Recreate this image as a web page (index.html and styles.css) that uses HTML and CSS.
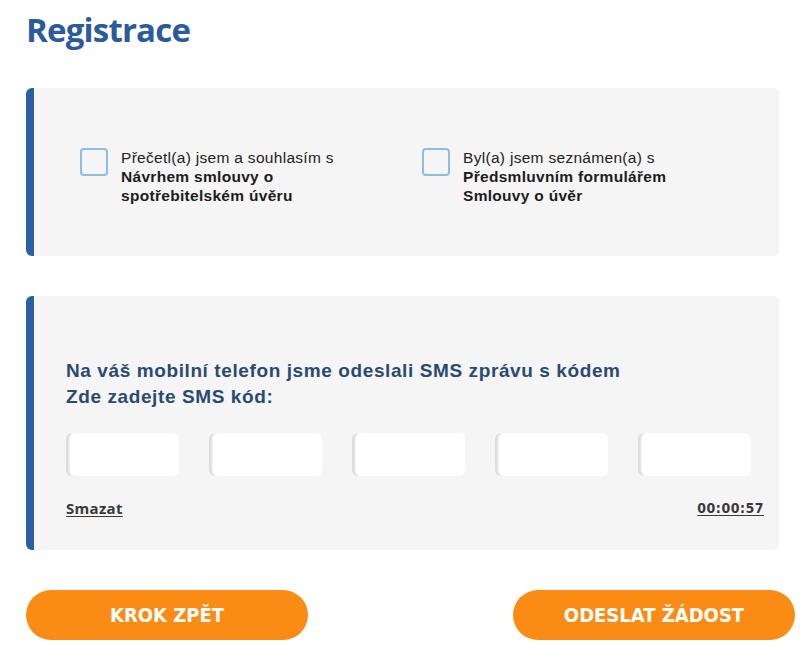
FILE: index.html
```html
<!DOCTYPE html>
<html lang="cs">
<head>
<meta charset="utf-8">
<title>Registrace</title>
<link rel="stylesheet" href="styles.css">
</head>
<body>
<div class="page">
  <h1 class="title">Registrace</h1>

  <section class="panel panel-consent">
    <label class="consent">
      <span class="checkbox"></span>
      <span class="consent-text">Přečetl(a) jsem a souhlasím s <b>Návrhem smlouvy o spotřebitelském úvěru</b></span>
    </label>
    <label class="consent">
      <span class="checkbox"></span>
      <span class="consent-text">Byl(a) jsem seznámen(a) s <b>Předsmluvním formulářem Smlouvy o úvěr</b></span>
    </label>
  </section>

  <section class="panel panel-sms">
    <p class="sms-heading">Na váš mobilní telefon jsme odeslali SMS zprávu s kódem<br>Zde zadejte SMS kód:</p>
    <div class="code-row">
      <input class="code" type="text" maxlength="1">
      <input class="code" type="text" maxlength="1">
      <input class="code" type="text" maxlength="1">
      <input class="code" type="text" maxlength="1">
      <input class="code" type="text" maxlength="1">
    </div>
    <div class="sms-footer">
      <a class="link" href="#">Smazat</a>
      <span class="timer">00:00:57</span>
    </div>
  </section>

  <div class="actions">
    <button class="btn" type="button">KROK ZPĚT</button>
    <button class="btn" type="button">ODESLAT ŽÁDOST</button>
  </div>
</div>
</body>
</html>
```

FILE: styles.css
```css
* { box-sizing: border-box; }

html, body {
  margin: 0;
  background: #ffffff;
}

.page {
  padding: 0 5px 0 26px;
  font-family: "Liberation Sans", Arial, sans-serif;
}

.title {
  margin: 0;
  padding-top: 10px;
  height: 88px;
  font-family: "Open Sans", sans-serif;
  font-weight: 700;
  font-size: 33px;
  line-height: 40px;
  letter-spacing: -0.8px;
  color: #2b5b9b;
}

.panel {
  width: 753px;
  background: #f5f5f5;
  border-left: 8px solid #2b5ea3;
  border-radius: 6px;
}

.panel-consent {
  height: 168px;
  padding: 60px 0 0 46px;
  display: grid;
  grid-template-columns: 342px 1fr;
  align-items: start;
}

.consent {
  display: flex;
  gap: 13px;
  cursor: pointer;
}

.checkbox {
  flex: none;
  width: 28px;
  height: 28px;
  border: 2px solid #8cbde5;
  border-radius: 4px;
  background: #f5f5f5;
}

.consent-text {
  width: 230px;
  font-size: 15.5px;
  line-height: 19px;
  letter-spacing: 0.3px;
  color: #222;
}

.consent-text b {
  color: #1c1c1c;
}

.panel-sms {
  margin-top: 40px;
  height: 254px;
  padding: 62px 15px 0 32px;
}

.sms-heading {
  margin: 0;
  font-size: 19px;
  font-weight: 700;
  line-height: 26px;
  letter-spacing: 0.6px;
  color: #2b4a70;
}

.code-row {
  margin-top: 23px;
  display: flex;
  gap: 30px;
}

.code {
  width: 113px;
  height: 43px;
  border: none;
  border-radius: 6px;
  background: #ffffff;
  box-shadow: inset 4px 0 2px -1px #dcdcdc;
  outline: none;
  font-size: 18px;
  text-align: center;
}

.sms-footer {
  margin-top: 22px;
  display: flex;
  justify-content: space-between;
  font-family: "Open Sans", sans-serif;
  font-weight: 700;
  font-size: 15px;
  line-height: 20px;
  color: #3a3a3a;
}

.link {
  color: #3a3a3a;
  text-decoration: underline;
  text-underline-offset: 2px;
  letter-spacing: 0.3px;
}

.timer {
  text-decoration: underline;
  text-underline-offset: 2px;
  font-family: "DejaVu Sans Condensed", "DejaVu Sans", sans-serif;
  font-size: 14px;
  letter-spacing: 0.5px;
}

.actions {
  margin-top: 40px;
  width: 769px;
  display: flex;
  justify-content: space-between;
}

.btn {
  width: 282px;
  height: 50px;
  border: none;
  border-radius: 25px;
  background: #fa8c16;
  color: #ffffff;
  font-family: "DejaVu Sans Condensed", "DejaVu Sans", sans-serif;
  font-weight: 700;
  font-size: 20px;
  cursor: pointer;
}
```
